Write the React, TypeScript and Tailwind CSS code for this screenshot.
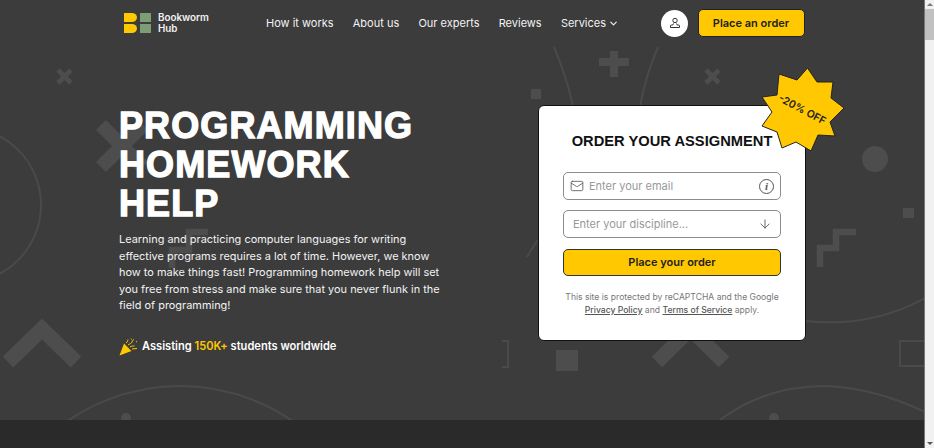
import { ArrowDown, ChevronDown, Mail } from "lucide-react";

const links = ["How it works", "About us", "Our experts", "Reviews"];

function Decor() {
  return (
    <svg className="absolute inset-0 h-full w-full" viewBox="0 0 924 420" fill="none">
      <g stroke="#4a4a4a" strokeWidth="2">
        <circle cx="-37" cy="205" r="78" />
        <circle cx="180" cy="584" r="198" />
        <path d="M554 47Q566 75 573 106" />
        <path d="M658 47Q646 75 640 106" />
        <path d="M527 257Q532 248 538 240" />
        <path d="M806 321Q870 328 925 298" />
        <path d="M720 420Q765 386 825 386Q875 388 925 412" />
        <path d="M502 341h6v26h-6" />
        <path d="M925 341h-25v25h25" />
      </g>
      <g fill="#4d4d4d">
        <circle cx="126" cy="418" r="5" />
        <circle cx="774" cy="418" r="5" />
        <circle cx="875" cy="159" r="13" />
        <rect x="531" y="89" width="10" height="10" />
        <rect x="903" y="208" width="11" height="10" />
        <rect x="556" y="350" width="22" height="21" />
        <path d="M610 51h8v7h11v8h-11v11h-8v-11h-11v-8h11z" />
      </g>
      <g stroke="#4d4d4d" strokeWidth="5">
        <path d="M58 70l13 13M71 70l-13 13" />
        <path d="M706 70l13 13M719 70l-13 13" />
      </g>
      <g stroke="#4d4d4d" strokeWidth="14">
        <path d="M101 125l42 42M143 125l-42 42" />
      </g>
      <g stroke="#4d4d4d" strokeWidth="15">
        <path d="M8 362l34-33 34 33" />
        <path d="M657 362l33.500-33 33.500 33" />
      </g>
      <g stroke="#4d4d4d" strokeWidth="6.500">
        <path d="M856 232h-20v16h-16v19" />
        <path d="M208 232h-19v18h-17v18" />
      </g>
    </svg>
  );
}

function Logo() {
  return (
    <svg width="27" height="20" viewBox="0 0 27 20">
      <path d="M0 0h8a5 4.500 0 0 1 0 9H0z" fill="#ffc800" />
      <path d="M0 11h8a5 4.500 0 0 1 0 9H0z" fill="#ffc800" />
      <rect x="16" y="0" width="11" height="9" fill="#7d9d74" />
      <rect x="16" y="11" width="11" height="9" fill="#7d9d74" />
    </svg>
  );
}

function UserIcon() {
  return (
    <svg width="12" height="12" viewBox="0 0 12 12" fill="none" stroke="#333" strokeWidth="1">
      <circle cx="6" cy="3.500" r="2.200" />
      <path d="M4.500 6.500L3.800 8H2.500a1 1 0 0 0-1 1v1.500h9V9a1 1 0 0 0-1-1H8.200L7.500 6.500" />
    </svg>
  );
}

function Popper() {
  return (
    <svg width="19" height="19" viewBox="0 0 19 19" fill="none">
      <path d="M0.500 18.500L5 6.500l7.500 7.500z" fill="#ffc800" />
      <path
        d="M7 6c2-1 1.500-2.500 2-3.500M9 8c2-1.500 3-1 4-3s1-2 2-3M11 10c1.500-1 3-1 4.500-1M13 12l5-.5M12 1.500l.5 1M17 5l1-.5"
        stroke="#ffc800"
        strokeWidth="1"
      />
    </svg>
  );
}

function InfoIcon() {
  return (
    <span className="flex h-[15px] w-[15px] items-center justify-center rounded-full border border-[#555] font-['Liberation_Serif',serif] text-[11px] font-bold italic leading-none text-[#555]">
      i
    </span>
  );
}

function Badge() {
  return (
    <div className="absolute left-[221px] top-[-40px] h-[88px] w-[88px]">
      <svg className="h-full w-full" viewBox="760 66 88 88">
        <polygon
          points="807.500,68 817,82 833,82 831,98 844,108 830,122 835,136 818,135 811,151 796,142 782,148 777,132 762,126 772,112 762,97 777,95 779,74 797,80"
          fill="#ffc800"
          stroke="#222"
          strokeWidth="1"
        />
      </svg>
      <div className="absolute inset-0 flex -translate-x-[2px] rotate-[28deg] items-center justify-center text-[10.500px] font-semibold text-[#222]">
        -20% OFF
      </div>
    </div>
  );
}

function OrderCard() {
  return (
    <div className="relative h-[236px] w-[268px] rounded-[6px] border border-[#111] bg-white px-[24px] pt-[25px]">
      <Badge />
      <h2 className="text-center font-['Liberation_Sans',sans-serif] text-[14.700px] font-bold leading-[20px] text-[#111]">
        ORDER YOUR ASSIGNMENT
      </h2>
      <div className="mt-[21px] flex h-[28px] items-center rounded-[5px] border border-[#8c8c8c] pl-[6px] pr-[6px] text-[11px] text-[#999]">
        <Mail size={14} strokeWidth={1.4} color="#555" />
        <span className="ml-[5px] flex-1">Enter your email</span>
        <InfoIcon />
      </div>
      <div className="mt-[10px] flex h-[28px] items-center rounded-[5px] border border-[#8c8c8c] pl-[9px] pr-[8px] text-[11px] text-[#999]">
        <span className="flex-1">Enter your discipline...</span>
        <ArrowDown size={14} strokeWidth={1.5} color="#555" />
      </div>
      <button
        type="button"
        className="mt-[11px] h-[27px] w-full rounded-[5px] border border-[#333] bg-[#ffc800] text-[11px] font-semibold text-[#222]"
      >
        Place your order
      </button>
      <p className="mt-[15px] text-center text-[8.600px] leading-[12.500px] text-[#777]">
        This site is protected by reCAPTCHA and the Google
        <br />
        <span className="font-medium text-[#555] underline">Privacy Policy</span> and{" "}
        <span className="font-medium text-[#555] underline">Terms of Service</span> apply.
      </p>
    </div>
  );
}

export default function App() {
  return (
    <div className="flex h-[448px] w-[934px] overflow-hidden bg-[#3c3c3c] font-['Inter',sans-serif]">
      <div className="flex w-[924px] flex-col">
        <section className="relative h-[420px] overflow-hidden">
          <Decor />
          <div className="relative">
            <header className="flex h-[46px] items-center pl-[124px]">
              <Logo />
              <span className="ml-[7px] w-[52px] text-[9.800px] font-semibold leading-[11.500px] text-[#f2f2f2]">
                Bookworm
                <br />
                Hub
              </span>
              <nav className="ml-[56px] flex items-center gap-[19.200px] text-[11px] text-[#f2f2f2]">
                {links.map((link) => (
                  <a key={link}>{link}</a>
                ))}
                <a className="flex items-center gap-[2px]">
                  Services <ChevronDown size={11} strokeWidth={2.5} />
                </a>
              </nav>
              <div className="ml-[42px] flex h-[27px] w-[27px] items-center justify-center rounded-full bg-white">
                <UserIcon />
              </div>
              <button
                type="button"
                className="ml-[9.500px] h-[28px] w-[107px] rounded-[5px] border border-[#222] bg-[#ffc800] text-[11px] font-semibold text-[#222]"
              >
                Place an order
              </button>
            </header>
            <div className="flex pl-[119px] pt-[59px]">
              <div className="w-[419px]">
                <h1 className="mt-[1px] font-['Liberation_Sans',sans-serif] text-[36px] font-bold leading-[39px] tracking-[1.100px] text-white [-webkit-text-stroke:1.300px_white]">
                  PROGRAMMING
                  <br />
                  HOMEWORK
                  <br />
                  HELP
                </h1>
                <p className="mt-[8px] w-[325px] text-[10.950px] leading-[16.500px] text-[#f2f2f2]">
                  Learning and practicing computer languages for writing effective programs requires a lot of time.
                  However, we know how to make things fast! Programming homework help will set you free from stress
                  and make sure that you never flunk in the field of programming!
                </p>
                <div className="mt-[23px] flex items-center gap-[4px] text-[11.100px] font-semibold text-white">
                  <Popper />
                  <span>
                    Assisting <span className="text-[#ffc800]">150K+</span> students worldwide
                  </span>
                </div>
              </div>
              <OrderCard />
            </div>
          </div>
        </section>
        <div className="flex-1 bg-[#2a2a2a]" />
      </div>
      <div className="flex w-[10px] flex-col items-center border-l border-[#777] bg-[#f1f1f1]">
        <div className="mt-[3px] h-0 w-0 border-x-[3px] border-b-[3px] border-x-transparent border-b-[#777]" />
        <div className="mt-[3px] h-[31px] w-full bg-[#c1c1c1]" />
        <div className="mb-[3px] mt-auto h-0 w-0 border-x-[3px] border-t-[3px] border-x-transparent border-t-[#555]" />
      </div>
    </div>
  );
}
